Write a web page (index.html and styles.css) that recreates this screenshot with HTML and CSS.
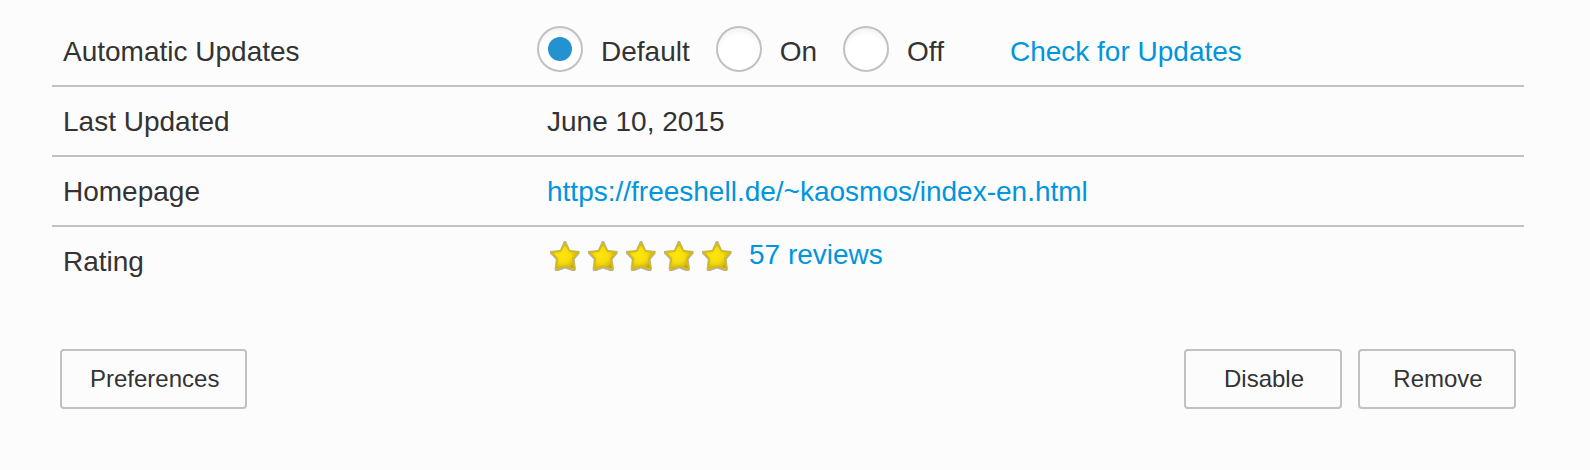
FILE: index.html
```html
<!DOCTYPE html>
<html lang="en">
<head>
<meta charset="utf-8">
<meta name="viewport" content="width=device-width, initial-scale=1">
<title>Add-on details</title>
<link rel="stylesheet" href="styles.css">
</head>
<body>
<svg class="defs" aria-hidden="true">
  <defs>
    <radialGradient id="gold" cx="42%" cy="46%" r="60%">
      <stop offset="0" stop-color="#ffe60c"/>
      <stop offset="0.5" stop-color="#f6dc0c"/>
      <stop offset="0.8" stop-color="#dcbf0e"/>
      <stop offset="1" stop-color="#b09418"/>
    </radialGradient>
    <symbol id="star" viewBox="0 0 32 32">
      <path d="M15 1 H17 L21 10 L30.6 11 V13.4 L25.6 19.4 L27 29 L26 31 H23 L16 28.4 L9.4 31 H6.4 L5.6 29 L6.8 19.4 L1 13.4 V11 L11 10 Z" fill="#8c8048" fill-opacity="0.6"/>
      <path d="M16 3.4 L20.4 11.2 L29 12.4 L23.8 18.8 L25.4 29 L16 26 L7.2 29 L8.6 18.8 L3 12.4 L11.8 11.2 Z" fill="url(#gold)" stroke="#d6bc12" stroke-width="1.6" stroke-linejoin="round"/>
    </symbol>
  </defs>
</svg>
<main class="details">
  <dl class="rows">
    <div class="row">
      <dt class="name" id="updates-name">Automatic Updates</dt>
      <dd class="value updates">
        <div class="options" role="radiogroup" aria-labelledby="updates-name">
          <label class="option"><input class="radio" type="radio" name="updates" checked><span class="caption">Default</span></label>
          <label class="option"><input class="radio" type="radio" name="updates"><span class="caption">On</span></label>
          <label class="option"><input class="radio" type="radio" name="updates"><span class="caption">Off</span></label>
        </div>
        <a class="link caption" href="#updates">Check for Updates</a>
      </dd>
    </div>
    <div class="row">
      <dt class="name">Last Updated</dt>
      <dd class="value">June 10, 2015</dd>
    </div>
    <div class="row">
      <dt class="name">Homepage</dt>
      <dd class="value"><a class="link" href="#homepage">https://freeshell.de/~kaosmos/index-en.html</a></dd>
    </div>
    <div class="row">
      <dt class="name">Rating</dt>
      <dd class="value rating">
        <span class="stars" role="img" aria-label="5 out of 5 stars">
          <svg class="star"><use href="#star"/></svg>
          <svg class="star"><use href="#star"/></svg>
          <svg class="star"><use href="#star"/></svg>
          <svg class="star"><use href="#star"/></svg>
          <svg class="star"><use href="#star"/></svg>
        </span>
        <a class="link" href="#reviews">57 reviews</a>
      </dd>
    </div>
  </dl>
  <div class="actions">
    <button class="button preferences" type="button">Preferences</button>
    <button class="button" type="button">Disable</button>
    <button class="button" type="button">Remove</button>
  </div>
</main>
</body>
</html>
```
FILE: styles.css
```css
* {
  box-sizing: border-box;
}

body {
  margin: 0;
  background: #fcfcfc;
  color: #333;
  font: 28px/32px "Liberation Sans", Arial, sans-serif;
}

.defs {
  position: absolute;
  width: 0;
  height: 0;
}

.details {
  padding: 17px 66px 60px 52px;
}

.rows {
  margin: 0;
}

.row {
  display: grid;
  grid-template-columns: 484px 1fr;
  align-items: center;
  min-height: 70px;
  padding: 2px 0 0 11px;
  border-bottom: 2px solid #c1c1c1;
}

.row:last-child {
  border-bottom-color: transparent;
}

.value {
  margin: 0;
}

.link {
  color: #0095dd;
  text-decoration: none;
}

.updates {
  display: flex;
  align-items: center;
  gap: 66px;
  margin-left: -10px;
  padding-bottom: 6px;
}

.options {
  display: flex;
  gap: 26px;
}

.option {
  display: flex;
  align-items: center;
  gap: 18px;
}

.caption {
  padding-top: 6px;
}

.radio {
  appearance: none;
  display: grid;
  place-items: center;
  width: 46px;
  height: 46px;
  margin: 0;
  border: 2px solid #c1c1c1;
  border-radius: 50%;
  background: #fff;
  box-shadow: inset 0 6px 4px -2px #f4f4f4;
}

.radio:checked::before {
  content: "";
  width: 24px;
  height: 24px;
  border-radius: 50%;
  background: #2292d0;
}

.rating {
  display: flex;
  align-items: flex-start;
  gap: 16px;
  align-self: start;
  padding-top: 10px;
}

.stars {
  display: flex;
  gap: 6px;
  padding: 1px 0 0 2px;
}

.star {
  width: 32px;
  height: 32px;
}

.actions {
  display: flex;
  justify-content: flex-end;
  gap: 16px;
  padding: 52px 8px 0;
}

.button {
  min-width: 158px;
  height: 60px;
  padding: 0 26px 0 28px;
  border: 2px solid #c1c1c1;
  border-radius: 4px;
  background: #fcfcfc;
  color: #333;
  font: 24px/32px "Liberation Sans", Arial, sans-serif;
}

.preferences {
  margin-right: auto;
}
```
